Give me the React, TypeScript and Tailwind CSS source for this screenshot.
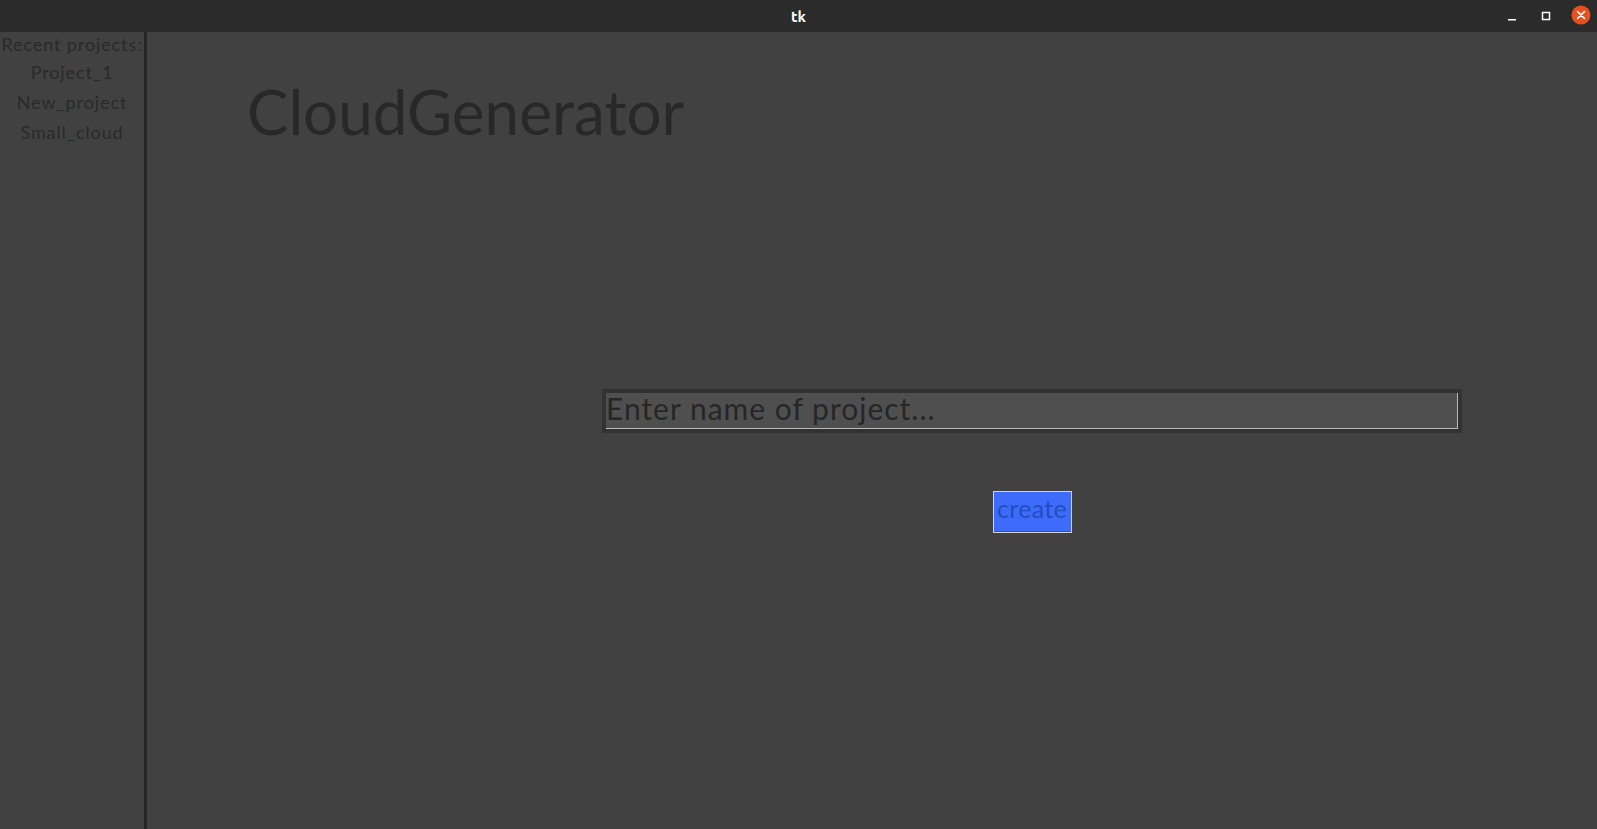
import React from "react";

export default function App() {
  const font = { fontFamily: "Lato, 'Noto Sans', sans-serif" };
  return (
    <div className="w-[1597px] h-[829px] flex flex-col bg-[#414141] overflow-hidden" style={font}>
      {/* Title bar */}
      <div className="relative h-[32px] shrink-0 bg-[#2b2b2b] flex items-center justify-center">
        <span className="text-[15px] font-bold text-white leading-none" style={{ fontFamily: "Ubuntu, 'Noto Sans', sans-serif" }}>tk</span>
        <div className="absolute right-0 top-0 h-[32px] flex items-center">
          <svg width="10" height="10" viewBox="0 0 10 10" className="mr-[24px] mt-[4px]">
            <rect x="1" y="6" width="8" height="1.5" fill="#ffffff" />
          </svg>
          <svg width="10" height="10" viewBox="0 0 10 10" className="mr-[20px]">
            <rect x="1.5" y="1.5" width="7" height="7" fill="none" stroke="#ffffff" strokeWidth="1.5" />
          </svg>
          <svg width="20" height="20" viewBox="0 0 20 20" className="mr-[6px] -mt-[3px]">
            <circle cx="10" cy="10" r="9.5" fill="#e5501e" />
            <path d="M6.5 6.5 L13.5 13.5 M13.5 6.5 L6.5 13.5" stroke="#ffffff" strokeWidth="1.6" strokeLinecap="round" />
          </svg>
        </div>
      </div>

      <div className="flex flex-1 min-h-0">
        {/* Sidebar */}
        <div className="w-[147px] shrink-0 border-r-[3px] border-[#262626] flex flex-col items-center text-[18px] tracking-[0.9px] text-[#2a2a2a]">
          <div className="mt-[1px] leading-[22px] whitespace-nowrap">Recent projects:</div>
          <div className="mt-[2px] leading-[30px]">Project_1</div>
          <div className="leading-[30px]">New_project</div>
          <div className="leading-[30px]">Small_cloud</div>
        </div>

        {/* Main */}
        <div className="flex-1 pt-[42px]">
          <div className="pl-[100px] text-[62px] leading-[74px] text-[#282828]">CloudGenerator</div>
          <div className="ml-[455px] mt-[241px] w-[860px] flex flex-col items-center">
            <div className="w-[860px] h-[44px] bg-[#323232] p-[4px]">
              <div className="h-[36px] bg-[#4f4f4f] border-b border-r border-[#b8b8b8] text-[30px] leading-[30px] tracking-[1px] text-[#262626] whitespace-nowrap">
                Enter name of project...
              </div>
            </div>
            <div className="mt-[58px] w-[79px] h-[42px] border border-[#d2d2d2] bg-[#3e6bfa] flex flex-col">
              <div className="flex-1 border-b border-[#2b4fc0] text-[25px] leading-[25px] tracking-[0.3px] text-[#1f4fc2] text-center pt-[4px]">
                create
              </div>
            </div>
          </div>
        </div>
      </div>
    </div>
  );
}
